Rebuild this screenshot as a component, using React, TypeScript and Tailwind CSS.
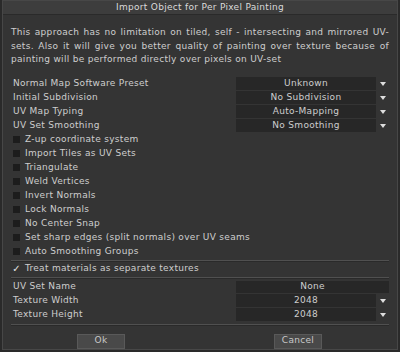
import { ReactNode } from "react";

const font = { fontFamily: '"DejaVu Sans", Verdana, sans-serif' };

function Arrow() {
  return (
    <svg width="6" height="4" viewBox="0 0 6 4" className="ml-[4px]">
      <path d="M0 0 H6 L3 4 Z" fill="#dedede" />
    </svg>
  );
}

function SelectRow({ label, value }: { label: string; value: string }) {
  return (
    <div className="flex h-[14px] items-center">
      <span className="w-[225px] pl-[2px]">{label}</span>
      <div className="flex h-[13px] w-[140px] items-center justify-center bg-[#272727]">{value}</div>
      <Arrow />
    </div>
  );
}

function CheckRow({ label, checked = false }: { label: string; checked?: boolean }) {
  return (
    <div className="flex h-[14px] items-center pl-[2px]">
      {checked ? (
        <span className="flex w-[7px] justify-center text-[10px] leading-none text-[#e4e4e4]">✓</span>
      ) : (
        <span className="h-[7px] w-[7px] bg-[#1c1c1c]" />
      )}
      <span className="ml-[5px]">{label}</span>
    </div>
  );
}

function Separator({ className = "" }: { className?: string }) {
  return <div className={`h-px bg-[#505050] shadow-[0_1px_0_#2a2a2a] ${className}`} />;
}

function Button({ children }: { children: ReactNode }) {
  return (
    <div className="flex h-[15px] w-[48px] items-center justify-center border border-[#595959] bg-[#494949] text-[#c8c8c8]">
      {children}
    </div>
  );
}

export default function App() {
  const checks = [
    "Z-up coordinate system",
    "Import Tiles as UV Sets",
    "Triangulate",
    "Weld Vertices",
    "Invert Normals",
    "Lock Normals",
    "No Center Snap",
    "Set sharp edges (split normals) over UV seams",
    "Auto Smoothing Groups",
  ];

  return (
    <div
      className="h-[352px] w-[400px] overflow-hidden bg-[#2a2a2a] text-[9px] tracking-[0.3px] text-[#cecece]"
      style={font}
    >
      <div className="mx-[2px] flex h-[350px] flex-col border border-[#474747] bg-[#343434]">
        <div className="flex h-[14px] items-center justify-center border-b border-[#2a2a2a] bg-[#3d3d3d] text-[#dadada]">
          Import Object for Per Pixel Painting
        </div>

        <div className="flex flex-1 flex-col px-[8px]">
          <p className="mt-[11px] text-justify leading-[13.5px]">
            This approach has no limitation on tiled, self - intersecting and mirrored UV-sets. Also it will
            give you better quality of painting over texture because of painting will be performed directly
            over pixels on UV-set
          </p>

          <div className="mt-[10px] flex flex-col">
            <SelectRow label="Normal Map Software Preset" value="Unknown" />
            <SelectRow label="Initial Subdivision" value="No Subdivision" />
            <SelectRow label="UV Map Typing" value="Auto-Mapping" />
            <SelectRow label="UV Set Smoothing" value="No Smoothing" />
            {checks.map((c) => (
              <CheckRow key={c} label={c} />
            ))}
          </div>

          <Separator className="mt-[1px] mb-[1px]" />
          <CheckRow label="Treat materials as separate textures" checked />
          <Separator className="mt-[1px] mb-[2px]" />

          <div className="flex flex-col">
            <div className="flex h-[14px] items-center">
              <span className="w-[225px] pl-[2px]">UV Set Name</span>
              <div className="flex h-[12px] w-[153px] items-center justify-center bg-[#272727]">None</div>
            </div>
            <SelectRow label="Texture Width" value="2048" />
            <SelectRow label="Texture Height" value="2048" />
          </div>

          <Separator className="mt-[2px]" />

          <div className="mt-[9px] flex gap-[149px] pl-[66px]">
            <Button>Ok</Button>
            <Button>Cancel</Button>
          </div>
        </div>
      </div>
    </div>
  );
}
